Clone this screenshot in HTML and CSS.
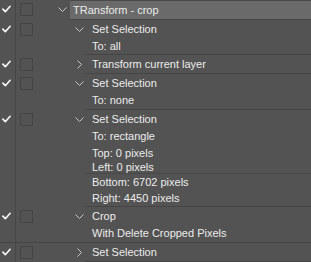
FILE: index.html
```html
<!DOCTYPE html>
<html>
<head>
<meta charset="utf-8">
<link rel="stylesheet" href="styles.css">
</head>
<body>
<div class="panel">

  <div class="item">
    <div class="gutter"><svg class="check" viewBox="0 0 10 8"><polyline points="1,4.2 3.7,7 9,1"/></svg></div>
    <div class="vis"><span class="box"></span></div>
    <div class="twist lvl0"><svg class="chev" viewBox="0 0 9 5"><polyline points="0.5,0.5 4.5,4.5 8.5,0.5"/></svg></div>
    <div class="node root">
      <div class="title">TRansform - crop</div>
    </div>
  </div>

  <div class="item">
    <div class="gutter"><svg class="check" viewBox="0 0 10 8"><polyline points="1,4.2 3.7,7 9,1"/></svg></div>
    <div class="vis"><span class="box"></span></div>
    <div class="twist lvl1"><svg class="chev" viewBox="0 0 9 5"><polyline points="0.5,0.5 4.5,4.5 8.5,0.5"/></svg></div>
    <div class="node">
      <div class="title">Set Selection</div>
      <div class="detail h16">To: all</div>
    </div>
  </div>

  <div class="item">
    <div class="gutter"><svg class="check" viewBox="0 0 10 8"><polyline points="1,4.2 3.7,7 9,1"/></svg></div>
    <div class="vis"><span class="box"></span></div>
    <div class="twist lvl1"><svg class="chev right" viewBox="0 0 5 9"><polyline points="0.5,0.5 4.5,4.5 0.5,8.5"/></svg></div>
    <div class="node">
      <div class="title">Transform current layer</div>
    </div>
  </div>

  <div class="item">
    <div class="gutter"><svg class="check" viewBox="0 0 10 8"><polyline points="1,4.2 3.7,7 9,1"/></svg></div>
    <div class="vis"><span class="box"></span></div>
    <div class="twist lvl1"><svg class="chev" viewBox="0 0 9 5"><polyline points="0.5,0.5 4.5,4.5 8.5,0.5"/></svg></div>
    <div class="node">
      <div class="title">Set Selection</div>
      <div class="detail h17">To: none</div>
    </div>
  </div>

  <div class="item">
    <div class="gutter"><svg class="check" viewBox="0 0 10 8"><polyline points="1,4.2 3.7,7 9,1"/></svg></div>
    <div class="vis"><span class="box"></span></div>
    <div class="twist lvl1"><svg class="chev" viewBox="0 0 9 5"><polyline points="0.5,0.5 4.5,4.5 8.5,0.5"/></svg></div>
    <div class="node">
      <div class="title">Set Selection</div>
      <div class="detail h17">To: rectangle</div>
      <div class="detail h16">Top: 0 pixels</div>
      <div class="detail h12 split">Left: 0 pixels</div>
      <div class="detail h17">Bottom: 6702 pixels</div>
      <div class="detail h15">Right: 4450 pixels</div>
    </div>
  </div>

  <div class="item full">
    <div class="gutter"><svg class="check" viewBox="0 0 10 8"><polyline points="1,4.2 3.7,7 9,1"/></svg></div>
    <div class="vis"><span class="box"></span></div>
    <div class="twist lvl1"><svg class="chev" viewBox="0 0 9 5"><polyline points="0.5,0.5 4.5,4.5 8.5,0.5"/></svg></div>
    <div class="node">
      <div class="title">Crop</div>
      <div class="detail h17">With Delete Cropped Pixels</div>
    </div>
  </div>

  <div class="item">
    <div class="gutter"><svg class="check" viewBox="0 0 10 8"><polyline points="1,4.2 3.7,7 9,1"/></svg></div>
    <div class="vis"><span class="box"></span></div>
    <div class="twist lvl1"><svg class="chev right" viewBox="0 0 5 9"><polyline points="0.5,0.5 4.5,4.5 0.5,8.5"/></svg></div>
    <div class="node">
      <div class="title">Set Selection</div>
    </div>
  </div>

</div>
</body>
</html>
```

FILE: styles.css
```css
html, body {
  margin: 0;
  padding: 0;
  background: #535353;
}

body {
  width: 311px;
  height: 262px;
  overflow: hidden;
  font-family: "Liberation Sans", Arial, sans-serif;
  font-size: 11px;
  color: #ececec;
}

.panel {
  display: flex;
  flex-direction: column;
}

.item {
  display: flex;
  align-items: stretch;
}

.item.full {
  border-bottom: 1px solid #454545;
}

.item.full .node {
  border-bottom: none;
}

.gutter {
  width: 15px;
  border-right: 1px solid #464646;
  display: flex;
  justify-content: center;
  align-items: flex-start;
}

.check {
  width: 9px;
  height: 8px;
  margin-top: 5px;
  margin-left: -2px;
  fill: none;
  stroke: #f4f4f4;
  stroke-width: 1.9;
  stroke-linecap: round;
  stroke-linejoin: round;
}

.vis {
  width: 13px;
  padding-left: 4px;
}

.box {
  display: block;
  width: 11px;
  height: 11px;
  margin-top: 3px;
  border: 1px solid #444444;
}

.twist {
  display: flex;
  align-items: flex-start;
}

.twist.lvl0 {
  width: 12px;
  padding-left: 25px;
}

.twist.lvl1 {
  width: 10px;
  padding-left: 42px;
}

.chev {
  width: 9px;
  height: 5px;
  margin-top: 7px;
  fill: none;
  stroke: #c8c8c8;
  stroke-width: 1;
}

.chev.right {
  width: 5px;
  height: 9px;
  margin-top: 5px;
  margin-left: 2px;
}

.node {
  flex: 1;
  border-bottom: 1px solid #454545;
  padding-left: 7px;
}

.node.root {
  background: #6a6a6a;
  border-top: 1px solid #4a4a4a;
  border-bottom: 1px solid #474747;
  padding-left: 3px;
}

.title {
  height: 18px;
  line-height: 18px;
  white-space: nowrap;
}

.detail {
  white-space: nowrap;
}

.h12 { height: 12px; line-height: 13px; }
.h15 { height: 15px; line-height: 15px; }
.h16 { height: 16px; line-height: 16px; }
.h17 { height: 17px; line-height: 17px; }

.split {
  border-bottom: 1px solid #484848;
  margin-left: -7px;
  padding-left: 7px;
}
```
